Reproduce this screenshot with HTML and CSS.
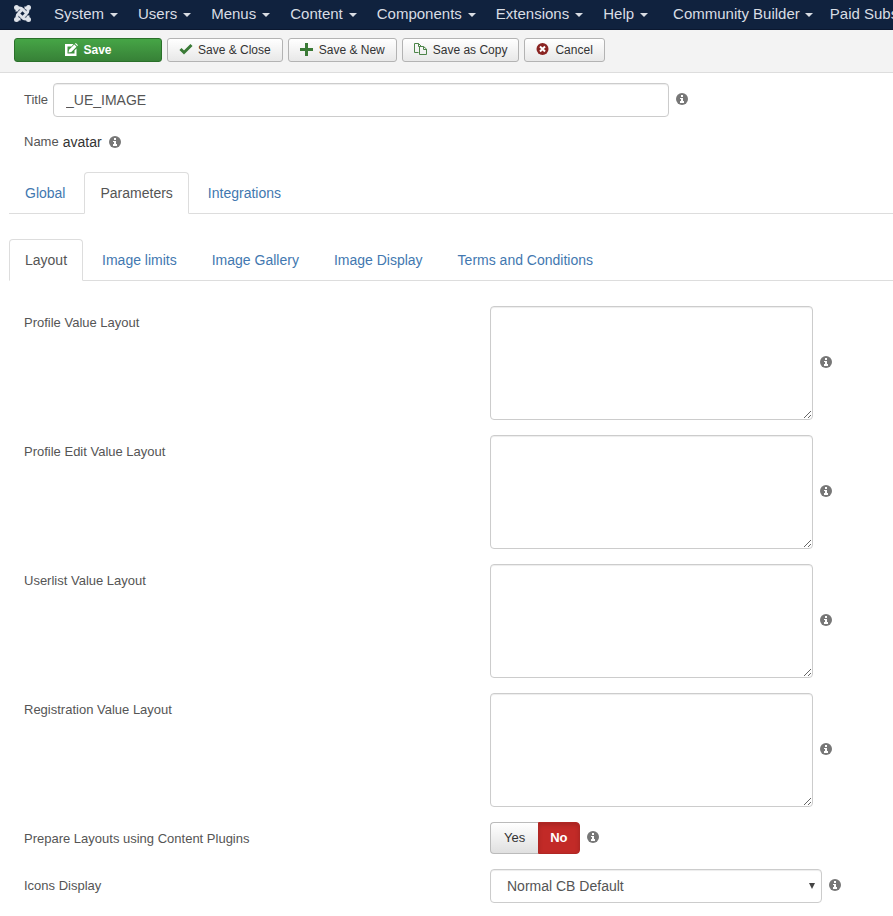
FILE: index.html
```html
<!DOCTYPE html>
<html lang="en">
<head>
<meta charset="utf-8">
<meta name="viewport" content="width=device-width, initial-scale=1">
<title>Edit field</title>
<link rel="stylesheet" href="styles.css">
</head>
<body>
<svg class="sprite" aria-hidden="true">
  <symbol id="info" viewBox="0 0 12 12">
    <circle cx="6" cy="6" r="6" fill="#777"/>
    <path fill="#fff" d="M5 2h2v2H5zM4 5h3v3h1v2H4V8h1V6H4z"/>
  </symbol>
</svg>

<nav class="navbar" aria-label="Main">
  <a class="brand" href="#" aria-label="Home">
    <svg viewBox="0 0 17 17" width="17" height="17" aria-hidden="true">
      <g fill="#dfe3ea">
        <circle cx="2.500" cy="2.500" r="2.500"/><circle cx="14.500" cy="2.500" r="2.500"/>
        <circle cx="2.500" cy="14.500" r="2.500"/><circle cx="14.500" cy="14.500" r="2.500"/>
      </g>
      <g fill="none" stroke="#dfe3ea" stroke-width="2.900">
        <path d="M3 6.500Q2.500 3 5.500 3Q7.500 3 9 4.800L12.500 8.300"/>
        <path d="M10.500 3Q14 2.500 14 5.500Q14 7.500 12.200 9L8.700 12.500"/>
        <path d="M14 10.500Q14.500 14 11.500 14Q9.500 14 8 12.200L4.500 8.700"/>
        <path d="M6.500 14Q3 14.500 3 11.500Q3 9.500 4.800 8L8.300 4.500"/>
      </g>
    </svg>
  </a>
  <ul class="menu">
    <li><a href="#">System<span class="caret"></span></a></li>
    <li><a href="#">Users<span class="caret"></span></a></li>
    <li><a href="#">Menus<span class="caret"></span></a></li>
    <li><a href="#">Content<span class="caret"></span></a></li>
    <li><a href="#">Components<span class="caret"></span></a></li>
    <li><a href="#">Extensions<span class="caret"></span></a></li>
    <li><a href="#">Help<span class="caret"></span></a></li>
  </ul>
  <ul class="menu menu-extra">
    <li><a href="#">Community Builder<span class="caret"></span></a></li>
    <li><a href="#">Paid Subscriptions<span class="caret"></span></a></li>
  </ul>
</nav>

<div class="toolbar">
  <button type="button" class="btn btn-primary">
    <svg viewBox="0 0 14 14" aria-hidden="true"><path fill="#fff" fill-rule="evenodd" d="M1 1h8.500L7.500 3.500H3.500v7h7V7.500l2-2V13H1z"/><path fill="#fff" d="M4.500 9.500l.6-2.800L10.300 1.500l2.200 2.200L7.300 8.900zM11 .8l.8-.8 2.200 2.200-.8.8z"/></svg>Save</button>
  <button type="button" class="btn">
    <svg viewBox="0 0 14 14" aria-hidden="true"><path fill="none" stroke="#3a7a36" stroke-width="3" d="M1.500 6L5 9.500l7.500-7.500"/></svg>Save &amp; Close</button>
  <button type="button" class="btn">
    <svg viewBox="0 0 14 14" aria-hidden="true"><path fill="#3a7a36" d="M5 0h3v5h5v3H8v5H5V8H0V5h5z"/></svg>Save &amp; New</button>
  <button type="button" class="btn">
    <svg viewBox="0 0 14 14" aria-hidden="true"><path fill="none" stroke="#4d8549" d="M4.500 9.500h-4v-9h4L7 3v1M4.500.5v3H6M5.500 11.500v-8h4L12.500 6v5.500zM9.500 3.500V6.500h3"/></svg>Save as Copy</button>
  <button type="button" class="btn">
    <svg viewBox="0 0 14 14" aria-hidden="true"><circle cx="6.500" cy="6" r="6" fill="#8a2422"/><path stroke="#fff" stroke-width="2" d="M4 3.500l5 5M9 3.500l-5 5"/></svg>Cancel</button>
</div>

<main>
  <div class="title-row">
    <label for="title">Title</label>
    <input class="control" id="title" type="text" value="_UE_IMAGE">
    <svg class="hint" role="img" aria-label="Help"><use href="#info"/></svg>
  </div>
  <div class="name-row">
    <span class="name-label">Name</span>
    <span class="name-value">avatar</span>
    <svg class="hint" role="img" aria-label="Help"><use href="#info"/></svg>
  </div>

  <ul class="tabs">
    <li><a href="#">Global</a></li>
    <li><a class="active" href="#">Parameters</a></li>
    <li><a href="#">Integrations</a></li>
  </ul>
  <ul class="tabs">
    <li><a class="active" href="#">Layout</a></li>
    <li><a href="#">Image limits</a></li>
    <li><a href="#">Image Gallery</a></li>
    <li><a href="#">Image Display</a></li>
    <li><a href="#">Terms and Conditions</a></li>
  </ul>

  <form class="fields">
    <div class="field">
      <label for="profile">Profile Value Layout</label>
      <div class="value"><textarea class="control" id="profile"></textarea><svg class="hint" role="img" aria-label="Help"><use href="#info"/></svg></div>
    </div>
    <div class="field">
      <label for="edit">Profile Edit Value Layout</label>
      <div class="value"><textarea class="control" id="edit"></textarea><svg class="hint" role="img" aria-label="Help"><use href="#info"/></svg></div>
    </div>
    <div class="field">
      <label for="userlist">Userlist Value Layout</label>
      <div class="value"><textarea class="control" id="userlist"></textarea><svg class="hint" role="img" aria-label="Help"><use href="#info"/></svg></div>
    </div>
    <div class="field">
      <label for="registration">Registration Value Layout</label>
      <div class="value"><textarea class="control" id="registration"></textarea><svg class="hint" role="img" aria-label="Help"><use href="#info"/></svg></div>
    </div>
    <div class="field">
      <span class="field-name" id="prepare">Prepare Layouts using Content Plugins</span>
      <div class="value">
        <div class="switch" role="radiogroup" aria-labelledby="prepare">
          <input type="radio" name="prepare" id="prepare-yes"><label for="prepare-yes">Yes</label>
          <input type="radio" name="prepare" id="prepare-no" checked><label for="prepare-no">No</label>
        </div>
        <svg class="hint" role="img" aria-label="Help"><use href="#info"/></svg>
      </div>
    </div>
    <div class="field">
      <label for="icons">Icons Display</label>
      <div class="value">
        <div class="select"><select class="control" id="icons"><option>Normal CB Default</option></select></div>
        <svg class="hint" role="img" aria-label="Help"><use href="#info"/></svg>
      </div>
    </div>
  </form>
</main>
</body>
</html>
```
FILE: styles.css
```css
* { box-sizing: border-box; }

body {
  margin: 0;
  background: #fff;
  color: #555;
  font: 13px/18px "Liberation Sans", Arial, sans-serif;
}

ul { margin: 0; padding: 0; list-style: none; }
a { text-decoration: none; }
.sprite { display: none; }

/* Main menu */
.navbar {
  display: flex;
  height: 30px;
  overflow: hidden;
  background: #10223e;
  border-bottom: 1px solid #0b1830;
}
.brand { flex: none; padding: 5px 13px 0 14px; }
.brand svg { display: block; }
.menu { display: flex; flex: none; }
.menu a {
  display: flex;
  align-items: center;
  gap: 6px;
  padding: 4px 10px;
  color: #d9dde4;
  font-size: 15px;
  line-height: 20px;
  white-space: nowrap;
}
.menu-extra { margin-left: 5px; }
.menu-extra a { gap: 5px; padding-right: 7px; }
.caret {
  margin-top: 2px;
  border: 4px solid transparent;
  border-top-color: #d9dde4;
  border-bottom: 0;
}

/* Actions */
.toolbar {
  display: flex;
  flex-wrap: wrap;
  gap: 5px;
  padding: 8px 14px 10px;
  background: #f3f3f3;
  border-bottom: 1px solid #ddd;
}
.btn {
  display: flex;
  align-items: center;
  justify-content: center;
  gap: 5px;
  height: 24px;
  padding: 0 11px;
  border: 1px solid #b3b3b3;
  border-radius: 3px;
  background: linear-gradient(#fff, #e8e8e8);
  color: #333;
  font: 12px/18px "Liberation Sans", Arial, sans-serif;
}
.btn svg { width: 14px; height: 14px; }
.btn-primary {
  width: 148px;
  border-color: #2a702a;
  background: linear-gradient(#46a546, #378137);
  color: #fff;
  font-weight: bold;
}

/* Form controls */
.control {
  margin: 0;
  border: 1px solid #ccc;
  border-radius: 4px;
  background: #fff;
  box-shadow: inset 0 1px 1px rgba(0, 0, 0, .075);
  color: #555;
  font: 14px/20px "Liberation Sans", Arial, sans-serif;
}
.hint { flex: none; width: 12px; height: 12px; margin: 0 0 2px 7px; }

main { padding: 10px 0 12px 9px; }
.title-row,
.name-row { display: flex; align-items: center; padding-left: 15px; }
.title-row label { flex: none; width: 29px; }
.title-row .control { flex: 0 1 616px; min-width: 0; height: 34px; padding: 6px 12px; }
.name-row { gap: 4px; margin: 15px 0 20px; line-height: 20px; }
.name-row .hint { margin: 0 0 0 3px; }
.name-value { color: #333; font-size: 14px; }

/* Tabs */
.tabs { display: flex; gap: 3px; margin-bottom: 25px; border-bottom: 1px solid #ddd; }
.tabs a {
  display: block;
  margin-bottom: -1px;
  padding: 10px 15px;
  border: 1px solid transparent;
  border-radius: 4px 4px 0 0;
  color: #4278b0;
  font-size: 14px;
  line-height: 20px;
}
.tabs .active { border-color: #ddd #ddd #fff; background: #fff; color: #555; }

/* Fields */
.fields { display: grid; gap: 15px; padding-left: 15px; }
.field { display: grid; grid-template-columns: minmax(0, 466px) minmax(0, 1fr); }
.field > label,
.field-name { padding-top: 8px; }
.value { display: flex; align-items: center; }
textarea.control { flex: 0 1 323px; min-width: 0; height: 114px; padding: 6px 12px; resize: both; }
.select { position: relative; flex: 0 1 332px; }
.select .control { width: 100%; height: 34px; padding: 6px 16px; appearance: none; }
.select::after {
  position: absolute;
  top: 14px;
  right: 7px;
  border: 3px solid transparent;
  border-top: 6px solid #444;
  border-bottom: 0;
  content: "";
  pointer-events: none;
}
.switch { display: flex; position: relative; }
.switch input { position: absolute; opacity: 0; }
.switch label {
  position: relative;
  height: 32px;
  padding: 6px 13px;
  border: 1px solid #bbb;
  border-right: 0;
  border-radius: 4px 0 0 4px;
  background: linear-gradient(#fff, #e0e0e0);
  color: #333;
}
.switch label:last-child { padding: 6px 11px; border-right: 1px solid #bbb; border-radius: 0 4px 4px 0; }
.switch input:checked + label {
  border-color: #b02724;
  background: #c22a27;
  box-shadow: inset 0 2px 4px rgba(0, 0, 0, .15);
  color: #fff;
  font-weight: bold;
}
```
